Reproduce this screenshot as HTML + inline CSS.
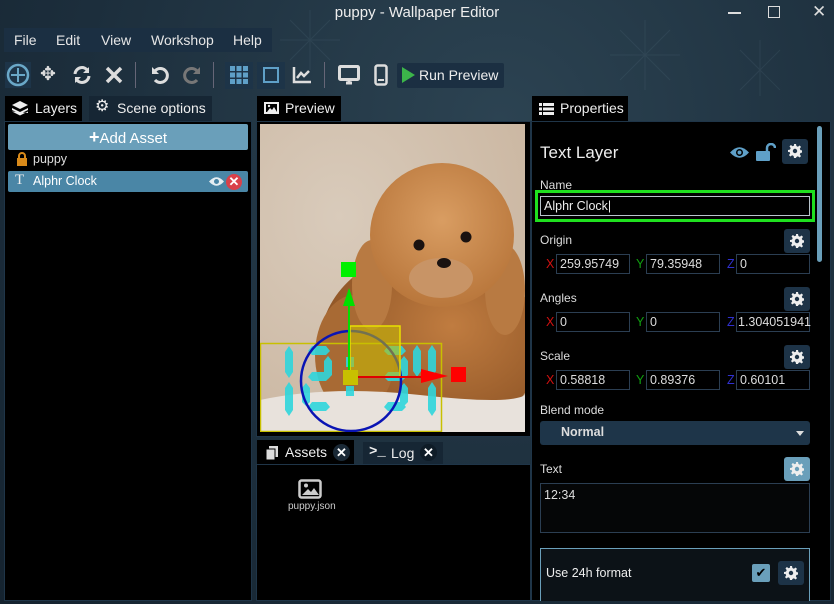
<!DOCTYPE html>
<html><head><meta charset="utf-8"><style>
*{margin:0;padding:0;box-sizing:border-box}
body{width:834px;height:604px;overflow:hidden;font-family:"Liberation Sans",sans-serif;color:#e6e6e6;font-size:14px;position:relative;
background:radial-gradient(ellipse at 60% 20%,#2c4352 0%,#1c2e3c 60%,#15232f 100%);}
.a{position:absolute}
.panel{position:absolute;background:#000;border:1px solid #1f3548}
.tab{position:absolute;height:25px;line-height:25px;font-size:14px;color:#eee;padding-left:8px}
.lbl{position:absolute;font-size:12px;color:#ddd}
.inp{position:absolute;height:20px;border:1px solid #2b3e52;background:#000;color:#ddd;font-size:12.5px;line-height:18px;padding-left:3px}
.ax{position:absolute;font-size:12.5px}
.gear{position:absolute;width:26px;height:24px;background:#1d3347;border-radius:3px}
.gear svg{position:absolute;left:6px;top:5px}
</style></head><body>
<svg class="a" style="left:0;top:0" width="834" height="96">
<g stroke="#5a7484" stroke-width="1" opacity=".18" fill="none">
<path d="M290 60l40-40M290 20l40 40M310 10v60M280 40h60"/>
<path d="M620 30l50 50M620 80l50-50M645 20v70M610 55h70"/>
<path d="M740 50l40 40M740 90l40-40M760 40v60"/>
</g></svg>
<div class="a" style="left:0;top:4px;width:834px;text-align:center;font-size:15px;color:#eee">puppy - Wallpaper Editor</div>
<div class="a" style="left:728px;top:12px;width:13px;height:1.5px;background:#ddd"></div>
<div class="a" style="left:768px;top:6px;width:12px;height:12px;border:1.5px solid #ddd"></div>
<div class="a" style="left:812px;top:2px;font-size:17px;color:#ddd">✕</div>
<div class="a" style="left:4px;top:28px;width:268px;height:24px;background:#1b2f42"></div>
<div class="a" style="left:14px;top:32px;font-size:14px">File</div>
<div class="a" style="left:56px;top:32px;font-size:14px">Edit</div>
<div class="a" style="left:101px;top:32px;font-size:14px">View</div>
<div class="a" style="left:151px;top:32px;font-size:14px">Workshop</div>
<div class="a" style="left:233px;top:32px;font-size:14px">Help</div>
<div class="a" style="left:5px;top:62px;width:26px;height:26px;background:#1d3448"></div>
<svg class="a" style="left:6px;top:63px" width="24" height="24"><circle cx="12" cy="12" r="10" fill="none" stroke="#6aa8c8" stroke-width="2.5"/><path d="M12 5v14M5 12h14" stroke="#6aa8c8" stroke-width="2"/></svg>
<div class="a" style="left:40px;top:63px;font-size:19px;color:#ddd">✥</div>
<svg class="a" style="left:72px;top:65px" width="20" height="20"><path d="M3 9a7 7 0 0 1 13-3M17 11a7 7 0 0 1-13 3" stroke="#ddd" stroke-width="3" fill="none"/><path d="M17 2v6h-6zM3 18v-6h6z" fill="#ddd"/></svg>
<svg class="a" style="left:105px;top:66px" width="18" height="18"><path d="M2 2l14 14M16 2L2 16" stroke="#ddd" stroke-width="3.5"/></svg>
<div class="a" style="left:135px;top:62px;width:1px;height:26px;background:#667"></div>
<svg class="a" style="left:150px;top:65px" width="20" height="20"><path d="M5 6a7 7 0 1 1 0 9" stroke="#ddd" stroke-width="3" fill="none"/><path d="M2 2v7h7z" fill="#ddd"/></svg>
<svg class="a" style="left:182px;top:65px" width="20" height="20"><path d="M15 6a7 7 0 1 0 0 9" stroke="#777" stroke-width="3" fill="none"/><path d="M18 2v7h-7z" fill="#777"/></svg>
<div class="a" style="left:213px;top:62px;width:1px;height:26px;background:#667"></div>
<div class="a" style="left:225px;top:62px;width:28px;height:27px;background:#1d3448"></div>
<svg class="a" style="left:230px;top:66px" width="18" height="18" fill="#5fa0c8"><rect x="0" y="0" width="5" height="5"/><rect x="6.5" y="0" width="5" height="5"/><rect x="13" y="0" width="5" height="5"/><rect x="0" y="6.5" width="5" height="5"/><rect x="6.5" y="6.5" width="5" height="5"/><rect x="13" y="6.5" width="5" height="5"/><rect x="0" y="13" width="5" height="5"/><rect x="6.5" y="13" width="5" height="5"/><rect x="13" y="13" width="5" height="5"/></svg>
<div class="a" style="left:257px;top:62px;width:28px;height:27px;background:#1d3448"></div>
<div class="a" style="left:263px;top:67px;width:16px;height:16px;border:2px solid #5fa0c8"></div>
<svg class="a" style="left:292px;top:66px" width="20" height="18"><path d="M2 1v15h17" stroke="#ddd" stroke-width="2.5" fill="none"/><path d="M5 12l4-5 3 3 5-5" stroke="#ddd" stroke-width="2.5" fill="none"/></svg>
<div class="a" style="left:324px;top:62px;width:1px;height:26px;background:#667"></div>
<svg class="a" style="left:338px;top:65px" width="22" height="20"><rect x="1.5" y="1.5" width="19" height="13" stroke="#ddd" stroke-width="3" fill="none" rx="1"/><path d="M8 18h6M11 15v3" stroke="#ddd" stroke-width="3"/></svg>
<svg class="a" style="left:374px;top:64px" width="14" height="22"><rect x="1.5" y="1.5" width="11" height="19" rx="2" stroke="#ddd" stroke-width="2.5" fill="none"/><path d="M4 16h6" stroke="#ddd" stroke-width="2"/></svg>
<div class="a" style="left:397px;top:63px;width:107px;height:25px;background:#1b2f42;border-radius:2px"></div>
<svg class="a" style="left:402px;top:67px" width="13" height="16"><path d="M0 0l13 8-13 8z" fill="#3cb54a"/></svg>
<div class="a" style="left:419px;top:67px;font-size:14px;color:#eee">Run Preview</div>
<div class="tab" style="left:5px;top:96px;width:77px;background:#000;padding-left:30px">Layers</div>
<svg class="a" style="left:12px;top:101px" width="16" height="15" fill="#eee"><path d="M8 0l8 4-8 4-8-4z"/><path d="M0 7l8 4 8-4v2l-8 4-8-4z"/><path d="M0 10.5l8 4 8-4v1.5"/></svg>
<div class="tab" style="left:89px;top:96px;width:123px;background:#162634;padding-left:28px">Scene options</div>
<div class="a" style="left:95px;top:99px;font-size:16px;color:#eee;line-height:16px">⚙</div>
<div class="panel" style="left:4px;top:121px;width:248px;height:480px"></div>
<div class="a" style="left:8px;top:124px;width:240px;height:26px;background:#6a9fba;border-radius:2px;text-align:center;line-height:26px;font-size:15px;color:#fff"><b style="font-size:18px">+</b>Add Asset</div>
<svg class="a" style="left:16px;top:152px" width="12" height="14"><path d="M3 6V4a3 3 0 0 1 6 0v2" stroke="#d98a1a" stroke-width="2" fill="none"/><rect x="1" y="6" width="10" height="8" fill="#d98a1a"/></svg>
<div class="a" style="left:33px;top:152px;font-size:12.5px;color:#ddd">puppy</div>
<div class="a" style="left:8px;top:171px;width:240px;height:21px;background:#4a86a6;border-radius:2px"></div>
<div class="a" style="left:15px;top:172px;font-size:15px;font-family:'Liberation Serif',serif;color:#eee">T</div>
<div class="a" style="left:33px;top:174px;font-size:12.5px;color:#fff">Alphr Clock</div>
<svg class="a" style="left:209px;top:176px" width="15" height="11"><path d="M0 5.5Q7.5-3 15 5.5Q7.5 14 0 5.5z" fill="#e6eef2"/><circle cx="7.5" cy="5.5" r="2.5" fill="#4a86a6"/></svg>
<div class="a" style="left:226px;top:174px;width:16px;height:16px;border-radius:50%;background:#d9414a;color:#fff;font-size:13px;line-height:16px;text-align:center;font-weight:bold">✕</div>
<div class="tab" style="left:257px;top:96px;width:84px;background:#000;padding-left:28px">Preview</div>
<svg class="a" style="left:264px;top:102px" width="15" height="12"><rect x="1" y="1" width="13" height="10" stroke="#eee" stroke-width="2" fill="none"/><path d="M3 10l3-4 2 2 2-3 3 5z" fill="#eee"/><circle cx="5" cy="4" r="1.2" fill="#eee"/></svg>
<div class="panel" style="left:256px;top:121px;width:275px;height:316px"></div>
<svg class="a" style="left:260px;top:124px" width="265" height="308" viewBox="260 124 265 308">
<defs>
<radialGradient id="bg" cx="0.3" cy="0.3" r="0.9"><stop offset="0" stop-color="#d9cbbb"/><stop offset="1" stop-color="#c9b49e"/></radialGradient>
<radialGradient id="head" cx="0.5" cy="0.4" r="0.6"><stop offset="0" stop-color="#d99d62"/><stop offset="1" stop-color="#b9773c"/></radialGradient>
<radialGradient id="body" cx="0.6" cy="0.4" r="0.6"><stop offset="0" stop-color="#c07c40"/><stop offset="1" stop-color="#8f5526"/></radialGradient>
</defs>
<rect x="260" y="124" width="265" height="308" fill="url(#bg)"/>
<ellipse cx="430" cy="345" rx="110" ry="95" fill="url(#body)"/>
<ellipse cx="355" cy="355" rx="40" ry="60" fill="#a86a34"/>
<ellipse cx="372" cy="285" rx="20" ry="45" fill="#b87a42"/>
<ellipse cx="505" cy="290" rx="20" ry="45" fill="#b87a42"/>
<ellipse cx="442" cy="235" rx="72" ry="72" fill="url(#head)"/>
<ellipse cx="441" cy="278" rx="32" ry="20" fill="#c89466"/>
<circle cx="419" cy="245" r="5.5" fill="#1a1210"/><circle cx="466" cy="237" r="5.5" fill="#1a1210"/>
<ellipse cx="444" cy="263" rx="7" ry="5" fill="#1a1210"/>
<path d="M260 400Q330 385 420 395T525 395V432H260z" fill="#e8e2dc"/>
<rect x="260.5" y="343.5" width="181" height="88" fill="none" stroke="#c8c000" stroke-width="1.5"/>
<g fill="#2fd6dc" opacity=".9">
<path d="M289 346l4 6v20l-4 6-4-6v-20z"/><path d="M289 382l4 6v22l-4 6-4-6v-22z"/>
<path d="M312 346h14l4 5-4 4h-14l-4-4z"/><path d="M328 356l4 5v14l-4 4-4-4v-14z"/><path d="M312 372h14l4 5-4 4h-14l-4-4z"/><path d="M306 383l4 5v14l-4 4-4-4v-14z"/><path d="M312 402h14l4 5-4 4h-14l-4-4z"/>
<rect x="346" y="357" width="8" height="10"/><rect x="346" y="386" width="8" height="10"/>
<path d="M388 346h14l4 5-4 4h-14l-4-4z"/><path d="M404 356l4 5v14l-4 4-4-4v-14z"/><path d="M388 372h14l4 5-4 4h-14l-4-4z"/><path d="M404 383l4 5v14l-4 4-4-4v-14z"/><path d="M388 402h14l4 5-4 4h-14l-4-4z"/>
<path d="M417 345l4 6v20l-4 6-4-6v-20z"/><path d="M432 345l4 6v20l-4 6-4-6v-20z"/><path d="M432 382l4 6v22l-4 6-4-6v-22z"/>
</g>
<circle cx="351" cy="381" r="50" fill="none" stroke="#0a14b4" stroke-width="2.5"/>
<rect x="350" y="326" width="50" height="51" fill="rgba(200,190,0,.55)" stroke="#e8e000" stroke-width="1.5"/>
<path d="M349 378v-88" stroke="#00e000" stroke-width="2"/><path d="M343 306l6-18 6 18z" fill="#00e000"/>
<rect x="341" y="262" width="15" height="15" fill="#00f000"/>
<path d="M350 377h80" stroke="#e00000" stroke-width="2"/><path d="M421 369l27 7-27 7z" fill="#ff0000"/>
<rect x="451" y="367" width="15" height="15" fill="#ff0000"/>
<rect x="343" y="370" width="15" height="15" fill="#c8c000"/>
</svg>
<div class="tab" style="left:257px;top:440px;width:97px;background:#000;padding-left:28px">Assets</div>
<svg class="a" style="left:265px;top:446px" width="14" height="15"><rect x="4" y="0" width="9" height="11" fill="#ddd"/><rect x="1" y="3" width="9" height="11" fill="#ddd" stroke="#000"/></svg>
<div class="a" style="left:333px;top:444px;width:17px;height:17px;border-radius:50%;background:#1a2936;color:#fff;font-weight:bold;font-size:13px;line-height:17px;text-align:center">✕</div>
<div class="tab" style="left:363px;top:442px;width:80px;height:23px;background:#162634;padding-left:28px;line-height:22px">Log</div>
<div class="a" style="left:369px;top:444px;font-size:14px;font-weight:bold;color:#eee;font-family:'Liberation Mono',monospace">&gt;_</div>
<div class="a" style="left:420px;top:444px;width:17px;height:17px;border-radius:50%;background:#0f1c27;color:#fff;font-weight:bold;font-size:13px;line-height:17px;text-align:center">✕</div>
<div class="panel" style="left:256px;top:464px;width:275px;height:137px"></div>
<svg class="a" style="left:298px;top:479px" width="24" height="20"><rect x="1.5" y="1.5" width="21" height="17" rx="2" stroke="#ccc" stroke-width="2.5" fill="none"/><path d="M4 16l6-6 3 3 3-4 5 7z" fill="#ccc"/><circle cx="8" cy="6.5" r="2" fill="#ccc"/></svg>
<div class="a" style="left:288px;top:501px;font-size:10px;color:#ccc">puppy.json</div>
<div class="tab" style="left:532px;top:96px;width:96px;background:#000;padding-left:28px">Properties</div>
<svg class="a" style="left:539px;top:103px" width="15" height="12" fill="#eee"><rect x="0" y="0" width="3" height="3"/><rect x="4" y="0" width="11" height="3"/><rect x="0" y="4.5" width="3" height="3"/><rect x="4" y="4.5" width="11" height="3"/><rect x="0" y="9" width="3" height="3"/><rect x="4" y="9" width="11" height="3"/></svg>
<div class="panel" style="left:531px;top:121px;width:300px;height:480px"></div>
<div class="a" style="left:817px;top:126px;width:5px;height:136px;background:#6a9fba;border-radius:3px"></div>
<div class="a" style="left:540px;top:143px;font-size:17px;color:#eee">Text Layer</div>
<svg class="a" style="left:730px;top:146px" width="19" height="13"><path d="M0 6.5Q9.5-4 19 6.5Q9.5 17 0 6.5z" fill="#5fa0c8"/><circle cx="9.5" cy="6.5" r="3.5" fill="#000"/><circle cx="9.5" cy="6.5" r="2" fill="#5fa0c8"/></svg>
<svg class="a" style="left:756px;top:143px" width="20" height="18"><path d="M11 8V5a4 4 0 0 1 8 0" stroke="#5fa0c8" stroke-width="2.5" fill="none"/><rect x="0" y="8" width="14" height="10" rx="1" fill="#5fa0c8"/></svg>
<div class="gear" style="left:782px;top:139px;height:25px"><svg width="14" height="14" viewBox="0 0 14 14"><path fill="#eee" d="M6 0h2l.4 2 1.5.7 1.7-1.2 1.4 1.4-1.2 1.7.7 1.5 2 .4v2l-2 .4-.7 1.5 1.2 1.7-1.4 1.4-1.7-1.2-1.5.7L8 14H6l-.4-2-1.5-.7-1.7 1.2-1.4-1.4 1.2-1.7-.7-1.5L0 8V6l2-.4.7-1.5-1.2-1.7 1.4-1.4 1.7 1.2 1.5-.7zM7 4.8a2.2 2.2 0 1 0 0 4.4 2.2 2.2 0 1 0 0-4.4z"/></svg></div>
<div class="lbl" style="left:540px;top:178px">Name</div>
<div class="a" style="left:535px;top:190px;width:280px;height:32px;border:3px solid #1fe01f"></div>
<div class="inp" style="left:540px;top:196px;width:270px;border-color:#b8c4cc;height:20px;color:#eee">Alphr Clock|</div>
<div class="lbl" style="left:540px;top:233px">Origin</div>
<div class="gear" style="left:784px;top:229px"><svg width="14" height="14" viewBox="0 0 14 14"><path fill="#eee" d="M6 0h2l.4 2 1.5.7 1.7-1.2 1.4 1.4-1.2 1.7.7 1.5 2 .4v2l-2 .4-.7 1.5 1.2 1.7-1.4 1.4-1.7-1.2-1.5.7L8 14H6l-.4-2-1.5-.7-1.7 1.2-1.4-1.4 1.2-1.7-.7-1.5L0 8V6l2-.4.7-1.5-1.2-1.7 1.4-1.4 1.7 1.2 1.5-.7zM7 4.8a2.2 2.2 0 1 0 0 4.4 2.2 2.2 0 1 0 0-4.4z"/></svg></div>
<div class="ax" style="left:546px;top:257px;color:#d01010">X</div><div class="inp" style="left:556px;top:254px;width:74px">259.95749</div>
<div class="ax" style="left:636px;top:257px;color:#10a010">Y</div><div class="inp" style="left:646px;top:254px;width:74px">79.35948</div>
<div class="ax" style="left:727px;top:257px;color:#3030d0">Z</div><div class="inp" style="left:736px;top:254px;width:74px">0</div>
<div class="lbl" style="left:540px;top:291px">Angles</div>
<div class="gear" style="left:784px;top:287px"><svg width="14" height="14" viewBox="0 0 14 14"><path fill="#eee" d="M6 0h2l.4 2 1.5.7 1.7-1.2 1.4 1.4-1.2 1.7.7 1.5 2 .4v2l-2 .4-.7 1.5 1.2 1.7-1.4 1.4-1.7-1.2-1.5.7L8 14H6l-.4-2-1.5-.7-1.7 1.2-1.4-1.4 1.2-1.7-.7-1.5L0 8V6l2-.4.7-1.5-1.2-1.7 1.4-1.4 1.7 1.2 1.5-.7zM7 4.8a2.2 2.2 0 1 0 0 4.4 2.2 2.2 0 1 0 0-4.4z"/></svg></div>
<div class="ax" style="left:546px;top:315px;color:#d01010">X</div><div class="inp" style="left:556px;top:312px;width:74px">0</div>
<div class="ax" style="left:636px;top:315px;color:#10a010">Y</div><div class="inp" style="left:646px;top:312px;width:74px">0</div>
<div class="ax" style="left:727px;top:315px;color:#3030d0">Z</div><div class="inp" style="left:736px;top:312px;width:74px;padding-left:1px">1.304051941</div>
<div class="lbl" style="left:540px;top:349px">Scale</div>
<div class="gear" style="left:784px;top:345px"><svg width="14" height="14" viewBox="0 0 14 14"><path fill="#eee" d="M6 0h2l.4 2 1.5.7 1.7-1.2 1.4 1.4-1.2 1.7.7 1.5 2 .4v2l-2 .4-.7 1.5 1.2 1.7-1.4 1.4-1.7-1.2-1.5.7L8 14H6l-.4-2-1.5-.7-1.7 1.2-1.4-1.4 1.2-1.7-.7-1.5L0 8V6l2-.4.7-1.5-1.2-1.7 1.4-1.4 1.7 1.2 1.5-.7zM7 4.8a2.2 2.2 0 1 0 0 4.4 2.2 2.2 0 1 0 0-4.4z"/></svg></div>
<div class="ax" style="left:546px;top:373px;color:#d01010">X</div><div class="inp" style="left:556px;top:370px;width:74px">0.58818</div>
<div class="ax" style="left:636px;top:373px;color:#10a010">Y</div><div class="inp" style="left:646px;top:370px;width:74px">0.89376</div>
<div class="ax" style="left:727px;top:373px;color:#3030d0">Z</div><div class="inp" style="left:736px;top:370px;width:74px">0.60101</div>
<div class="lbl" style="left:540px;top:403px">Blend mode</div>
<div class="a" style="left:540px;top:421px;width:270px;height:24px;background:#1e3549;border-radius:3px"></div>
<div class="a" style="left:561px;top:425px;font-size:12.5px;font-weight:bold;color:#ddd">Normal</div>
<svg class="a" style="left:796px;top:431px" width="8" height="5"><path d="M0 0h8l-4 5z" fill="#ddd"/></svg>
<div class="lbl" style="left:540px;top:462px">Text</div>
<div class="gear" style="left:784px;top:457px;background:#6a9fba"><svg width="14" height="14" viewBox="0 0 14 14"><path fill="#eee" d="M6 0h2l.4 2 1.5.7 1.7-1.2 1.4 1.4-1.2 1.7.7 1.5 2 .4v2l-2 .4-.7 1.5 1.2 1.7-1.4 1.4-1.7-1.2-1.5.7L8 14H6l-.4-2-1.5-.7-1.7 1.2-1.4-1.4 1.2-1.7-.7-1.5L0 8V6l2-.4.7-1.5-1.2-1.7 1.4-1.4 1.7 1.2 1.5-.7zM7 4.8a2.2 2.2 0 1 0 0 4.4 2.2 2.2 0 1 0 0-4.4z"/></svg></div>
<div class="a" style="left:540px;top:483px;width:270px;height:50px;border:1px solid #2b3e52;background:#050607;font-size:12.5px;padding:4px 3px;color:#ddd">12:34</div>
<div class="a" style="left:540px;top:548px;width:270px;height:53px;border:1px solid #6a9fba;border-bottom:none;background:#0c1217"></div>
<div class="a" style="left:546px;top:566px;font-size:12.5px;color:#eee">Use 24h format</div>
<div class="a" style="left:752px;top:564px;width:18px;height:18px;background:#6a9fba;border-radius:2px;color:#000;font-size:13px;line-height:18px;text-align:center">✔</div>
<div class="gear" style="left:778px;top:561px"><svg width="14" height="14" viewBox="0 0 14 14"><path fill="#eee" d="M6 0h2l.4 2 1.5.7 1.7-1.2 1.4 1.4-1.2 1.7.7 1.5 2 .4v2l-2 .4-.7 1.5 1.2 1.7-1.4 1.4-1.7-1.2-1.5.7L8 14H6l-.4-2-1.5-.7-1.7 1.2-1.4-1.4 1.2-1.7-.7-1.5L0 8V6l2-.4.7-1.5-1.2-1.7 1.4-1.4 1.7 1.2 1.5-.7zM7 4.8a2.2 2.2 0 1 0 0 4.4 2.2 2.2 0 1 0 0-4.4z"/></svg></div>
</body></html>
